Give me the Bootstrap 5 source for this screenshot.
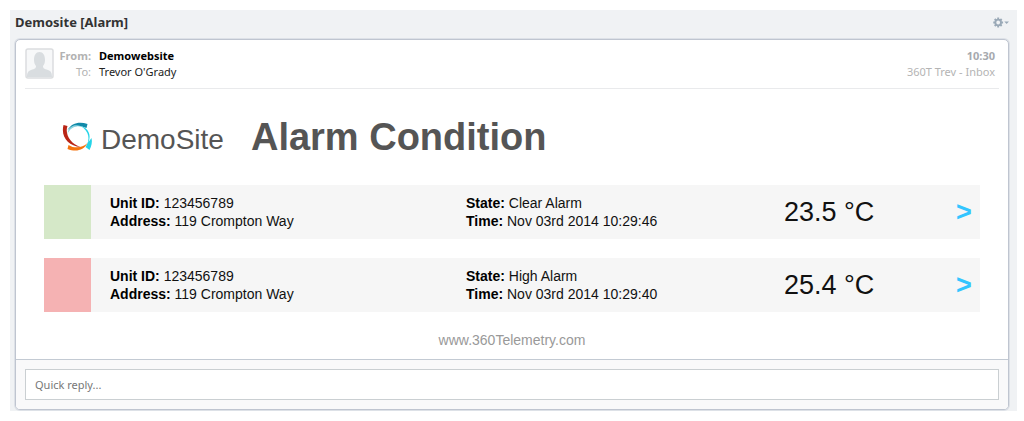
<!DOCTYPE html>
<html lang="en">
<head>
<meta charset="utf-8">
<meta name="viewport" content="width=device-width, initial-scale=1">
<title>Demosite [Alarm]</title>
<link href="https://cdn.jsdelivr.net/npm/bootstrap@5.3.0/dist/css/bootstrap.min.css" rel="stylesheet">
<style>
  body { font-family: "Noto Sans", sans-serif; font-size: 11px; line-height: 16px; color: #222; background: #fff; padding: 10px 7px 10px 10px; }
  .mail-panel { background: #f0f2f4; padding: 0 8px 1px 5px; }
  .mail-title { font-size: 13px; line-height: 24px; padding-bottom: 4px; font-weight: 700; color: #333; }
  .gear { color: #9aa9b7; line-height: 1; }
  .mail-card { border: 1px solid #bfc5d0; border-radius: 5px; --bs-card-border-radius: 5px; box-shadow: 0 0 0 1px #dde1e7; overflow: hidden; margin-top: 1px; }
  .mail-head { margin: 0 9px; padding: 8px 0 8px; border-bottom: 1px solid #e9eaec; }
  .mail-meta { display: grid; grid-template-columns: 33px auto; column-gap: 8px; margin: 0; }
  .mail-meta dt, .mail-meta dd { margin: 0; white-space: nowrap; }
  .mail-meta dt { text-align: right; color: #b2b2b2; }
  .mail-meta dt:last-of-type { font-weight: 400; }
  .mail-side { color: #b4b4b4; padding-right: 4px; }
  .mail-side time { color: #a6a9ae; }
  .message { font-family: "Liberation Sans", Arial, sans-serif; font-size: 14px; line-height: 18px; color: #111; padding: 27px 28px 10px; }
  .message strong { color: #000; }
  .brand-row { color: #555; padding: 0 18px 27px; gap: 27px; }
  .brand-name { font-size: 28px; line-height: 36px; padding-top: 6px; }
  .message h1 { font-size: 38px; line-height: 40px; font-weight: 700; }
  .alarm { display: grid; grid-template-columns: 47px 375fr 318fr 172fr 24px; align-items: center; background: #f6f6f6; min-height: 54px; margin-bottom: 19px; }
  .swatch { align-self: stretch; }
  .swatch-clear { background: #d5e8c8; }
  .swatch-high { background: #f5b2b3; }
  .unit { padding-left: 19px; }
  .reading { font-size: 27px; line-height: 36px; }
  .go { color: #33c5ff; font-size: 27px; line-height: 36px; font-weight: 700; text-decoration: none; }
  .site-link { color: #999; text-decoration: none; }
  .mail-foot { background: #f9f9fa; border-top: 1px solid #c3cad3; padding: 9px; }
  .reply { font-size: 11px; line-height: 16px; height: 31px; padding: 0 9px; border: 1px solid #cacfd2; border-radius: 0; }
  .reply::placeholder { color: #777; }
</style>
</head>
<body>
<main class="mail-panel">
  <header class="d-flex justify-content-between align-items-center">
    <h2 class="mail-title mb-0">Demosite [Alarm]</h2>
    <button type="button" class="gear btn p-0 pb-1 border-0 d-flex" aria-label="Message options">
      <svg width="16" height="11" viewBox="0 0 17 11" aria-hidden="true">
        <circle cx="5.5" cy="5.5" r="3" fill="none" stroke="currentColor" stroke-width="2"/>
        <path d="M5.5 .3v2M5.5 8.700v2M.3 5.500h2M8.700 5.500h2M1.800 1.800l1.400 1.400M7.800 7.800l1.400 1.400M1.800 9.200l1.400-1.400M7.800 3.200l1.400-1.400" stroke="currentColor" stroke-width="2"/>
        <path d="M12 4.500h5L14.500 7z" fill="currentColor"/>
      </svg>
    </button>
  </header>
  <article class="mail-card card">
    <div class="mail-head d-flex">
      <svg width="29" height="31" viewBox="0 0 29 31" class="flex-shrink-0 me-1" role="img" aria-label="Sender picture">
        <rect x="1" y="1" width="27" height="29" rx="2" fill="#f7f8f9" stroke="#dbdddf" stroke-width="1.500"/>
        <path d="M2 29c0-4 1-6 4-7 4-1 5-2 5-4-1-1-2-3-2-6 0-5 2-8 5.500-8S20 7 20 12c0 3-1 5-2 6 0 2 1 3 5 4 3 1 4 3 4 7z" fill="#d9dde0"/>
      </svg>
      <dl class="mail-meta">
        <dt>From:</dt><dd class="fw-bold text-black">Demowebsite</dd>
        <dt>To:</dt><dd>Trevor O'Grady</dd>
      </dl>
      <div class="mail-side ms-auto text-end">
        <time class="d-block fw-bold" datetime="10:30">10:30</time>
        <span>360T Trev - Inbox</span>
      </div>
    </div>
    <div class="message">
      <div class="brand-row d-flex align-items-center">
        <div class="d-flex align-items-center gap-2">
          <svg width="31" height="30" viewBox="0 0 30 30" aria-hidden="true">
            <path d="M5 8C9 1 17-1 25 2l-1 4C17 3 11 3 5 8z" fill="#128aa9"/>
            <path d="M18 4C26 6 29 13 26 20l3-4c1 4 0 8-2 12l-4-3c5-7 4-16-5-21z" fill="#25d4e8"/>
            <path d="M25 21C21 29 13 30 5 27l1-4 4 2c6 1 11 0 15-4z" fill="#f4730f"/>
            <path d="M1 3L5 4C2 12 8 22 18 25 6 24-2 15 1 3z" fill="#b92516"/>
            <path d="M5 12C6 4 12 2 18 4 11 4 7 7 5 12z" fill="#8bd3df"/>
          </svg>
          <span class="brand-name">DemoSite</span>
        </div>
        <h1 class="mb-0">Alarm Condition</h1>
      </div>
      <section class="alarm">
        <div class="swatch swatch-clear"></div>
        <div class="unit"><strong>Unit ID:</strong> 123456789<br><strong>Address:</strong> 119 Crompton Way</div>
        <div><strong>State:</strong> Clear Alarm<br><strong>Time:</strong> Nov 03rd 2014 10:29:46</div>
        <div class="reading">23.5 °C</div>
        <a class="go" href="#" aria-label="Open alarm">&gt;</a>
      </section>
      <section class="alarm">
        <div class="swatch swatch-high"></div>
        <div class="unit"><strong>Unit ID:</strong> 123456789<br><strong>Address:</strong> 119 Crompton Way</div>
        <div><strong>State:</strong> High Alarm<br><strong>Time:</strong> Nov 03rd 2014 10:29:40</div>
        <div class="reading">25.4 °C</div>
        <a class="go" href="#" aria-label="Open alarm">&gt;</a>
      </section>
      <div class="text-center"><a class="site-link" href="#">www.360Telemetry.com</a></div>
    </div>
    <form class="mail-foot">
      <input type="text" class="reply form-control" placeholder="Quick reply..." aria-label="Quick reply">
    </form>
  </article>
</main>
<script src="https://cdn.jsdelivr.net/npm/bootstrap@5.3.0/dist/js/bootstrap.bundle.min.js"></script>
</body>
</html>
